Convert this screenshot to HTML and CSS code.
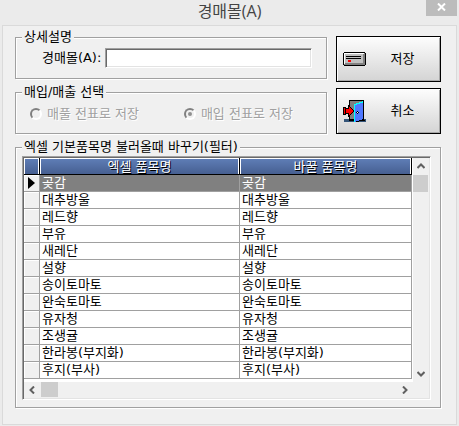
FILE: index.html
```html
<!DOCTYPE html>
<html lang="ko">
<head>
<meta charset="utf-8">
<title>경매몰(A)</title>
<link rel="stylesheet" href="styles.css">
</head>
<body>
<div class="window">
  <header class="titlebar">
    <h1>경매몰(A)</h1>
    <button class="close" type="button" aria-label="닫기"><svg width="9" height="8" viewBox="0 0 9 8"><path d="M1 0.5L8 7.5M8 0.5L1 7.5" stroke="#fff" stroke-width="2"/></svg></button>
  </header>
  <main class="panel">
    <div class="top">
      <div class="groups">
        <fieldset class="group details">
          <legend>상세설명</legend>
          <div class="field"><label for="mall">경매몰(A):</label><input id="mall" type="text"></div>
        </fieldset>
        <fieldset class="group kinds">
          <legend>매입/매출 선택</legend>
          <div class="choices">
            <label><input type="radio" name="kind" disabled>매풀 전표로 저장</label>
            <label><input type="radio" name="kind" checked disabled>매입 전표로 저장</label>
          </div>
        </fieldset>
      </div>
      <div class="actions">
        <button class="action" type="button">
          <svg width="23" height="14" viewBox="0 0 23 14" shape-rendering="crispEdges"><path d="M1 0h21v1h1v12h-1v1H1v-1H0V1h1z" fill="#000"/><path d="M1 1h21v12H1z" fill="#808080"/><path d="M1 1h20v1H2v10H1z" fill="#fff"/><path d="M2 2h18v9H2z" fill="#c0c0c0"/><path d="M3 4h15v1H3zM3 6h15v1H3z" fill="#000"/><path d="M5 8h3v2H5z" fill="#f00"/></svg>
          <span>저장</span>
        </button>
        <button class="action" type="button">
          <svg width="23" height="22" viewBox="0 0 23 22" shape-rendering="crispEdges"><path d="M1 19h22v3H1z" fill="#345478"/><path d="M6 0h15v20h1v1H6z" fill="#000"/><path d="M7 1h13v18H7z" fill="#808080"/><path d="M11 4l9-3v19l-5 2h-4z" fill="#4f78ff"/><path d="M11 4h2V3h3V2h3V1h1v2h-3v1h-3v1h-2v17h-1z" fill="#0ff"/><path d="M20 1h1v19h-2v1h-3v1h-3v-1h3v-1h3v-1h1z" fill="#000"/><path d="M14 11h1v1h1v1h-1v1h-1v-1h-1v-1h1z" fill="#000"/><path d="M14 12h1v1h-1z" fill="#fff"/><path d="M0 7h3v1h2V5h1v1h1v1h1v1h1v1h1v1h1v2h-1v1H9v1H8v1H7v1H6v1H5v-3H3v1H0z" fill="#000"/><path d="M1 8h1v6H1zM3 9h3V7h1v1h1v1h1v1h1v2H9v1H8v1H7v1H6v-2H3z" fill="#f00"/></svg>
          <span>취소</span>
        </button>
      </div>
    </div>
    <fieldset class="group filter">
      <legend>엑셀 기본품목명 불러올때 바꾸기(필터)</legend>
      <div class="grid">
        <div class="view">
          <table>
            <colgroup><col class="mark"><col class="from"><col></colgroup>
            <thead><tr><th aria-label="선택"></th><th>엑셀 품목명</th><th>바꿀 품목명</th></tr></thead>
            <tbody>
              <tr class="current"><td><svg width="7" height="12" viewBox="0 0 7 12"><path d="M0 0L7 6L0 12z"/></svg></td><td>곶감</td><td>곶감</td></tr>
              <tr><td></td><td>대추방울</td><td>대추방울</td></tr>
              <tr><td></td><td>레드향</td><td>레드향</td></tr>
              <tr><td></td><td>부유</td><td>부유</td></tr>
              <tr><td></td><td>새레단</td><td>새레단</td></tr>
              <tr><td></td><td>설향</td><td>설향</td></tr>
              <tr><td></td><td>송이토마토</td><td>송이토마토</td></tr>
              <tr><td></td><td>완숙토마토</td><td>완숙토마토</td></tr>
              <tr><td></td><td>유자청</td><td>유자청</td></tr>
              <tr><td></td><td>조생귤</td><td>조생귤</td></tr>
              <tr><td></td><td>한라봉(부지화)</td><td>한라봉(부지화)</td></tr>
              <tr><td></td><td>후지(부사)</td><td>후지(부사)</td></tr>
            </tbody>
          </table>
        </div>
        <div class="bar vertical">
          <button type="button" aria-label="위로"><svg width="8" height="6" viewBox="0 0 8 6"><path d="M0.5 5L4 1.5L7.5 5"/></svg></button>
          <div class="thumb"></div>
          <button class="end" type="button" aria-label="아래로"><svg width="8" height="6" viewBox="0 0 8 6"><path d="M0.5 1L4 4.5L7.5 1"/></svg></button>
        </div>
        <div class="bar horizontal">
          <button type="button" aria-label="왼쪽"><svg width="6" height="8" viewBox="0 0 6 8"><path d="M5 0.5L1.5 4L5 7.5"/></svg></button>
          <div class="thumb"></div>
          <button class="end" type="button" aria-label="오른쪽"><svg width="6" height="8" viewBox="0 0 6 8"><path d="M1 0.5L4.5 4L1 7.5"/></svg></button>
        </div>
      </div>
    </fieldset>
  </main>
</div>
</body>
</html>
```
FILE: styles.css
```css
* { box-sizing: border-box; }
body {
  margin: 0;
  background: #ebebeb;
  color: #000;
  font: 13px/16px "DejaVu Sans", "Noto Sans CJK KR", sans-serif;
}
button, input { font: inherit; color: inherit; }
.window { padding: 0 2px 2px; }

.titlebar {
  display: grid;
  grid-template-columns: 1fr auto 1fr;
  align-items: start;
  height: 25px;
}
.titlebar h1 {
  grid-column: 2;
  margin: 0;
  color: #444;
  font: 16px/22px "Open Sans", "Noto Sans CJK KR", sans-serif;
}
.close {
  display: grid;
  place-items: center;
  justify-self: end;
  width: 31px;
  height: 16px;
  padding: 0 0 2px;
  border: 0;
  background: #bcbcbc;
}

.panel {
  padding: 3px 15px 16px 12px;
  border: 1px solid #dadada;
  background: #f0f0f0;
}
.top { display: flex; gap: 9px; }
.groups { flex: 1; min-width: 0; }
.actions {
  display: flex;
  flex-direction: column;
  gap: 6px;
  width: 105px;
  padding-top: 7px;
}

.group {
  min-width: 0;
  margin: 0;
  padding: 0;
  border: 1px solid #a0a0a0;
  box-shadow: 1px 1px 0 #fff, inset 1px 1px 0 #fff;
}
.group legend {
  margin-left: 6px;
  padding: 0 2px;
  background: #f0f0f0;
}
.details { height: 50px; }
.kinds { height: 50px; margin-top: 5px; }
.field {
  display: flex;
  align-items: center;
  justify-content: space-between;
  gap: 4px;
  padding: 3px 14px 0 26px;
}
.field input {
  flex: 1;
  min-width: 0;
  height: 20px;
  padding: 0 2px;
  border: 1px solid;
  border-color: #a0a0a0 #fff #fff #a0a0a0;
  background: #fff;
  box-shadow: inset 1px 1px 0 #696969, inset -1px -1px 0 #e3e3e3;
}
.choices {
  display: grid;
  grid-template-columns: 13fr 12fr;
  padding: 6px 0 0 14px;
  color: #a0a0a0;
  text-shadow: 1px 1px 0 #fff;
}
.choices label { display: flex; align-items: center; gap: 5px; }
.choices input {
  appearance: none;
  display: grid;
  place-items: center;
  width: 12px;
  height: 12px;
  margin: 0;
  border: 2px solid;
  border-color: #808080 #fff #fff #808080;
  border-radius: 50%;
}
.choices input:checked::before {
  content: "";
  width: 4px;
  height: 4px;
  border-radius: 50%;
  background: #909090;
}

.action {
  display: grid;
  grid-template-columns: 23px 1fr;
  align-items: center;
  height: 46px;
  padding: 0 1px 0 6px;
  border: 1px solid #000;
  background: linear-gradient(#fdfdfd, #d4d4d4);
  box-shadow: inset 1px 1px 0 #fff, inset -1px -1px 0 #a8a8a8;
}

.filter { margin-top: 5px; }
.grid {
  display: grid;
  grid-template-columns: minmax(0, 1fr) 16px;
  margin: 1px 9px 7px 6px;
  border: 1px solid;
  border-color: #a0a0a0 #fff #fff #a0a0a0;
  background: #f0f0f0;
  box-shadow: inset 1px 1px 0 #696969, inset -1px -1px 0 #e3e3e3;
  padding: 1px;
}
.view { padding: 0 1px 3px 0; background: #fff; }
table {
  width: 100%;
  table-layout: fixed;
  border-collapse: separate;
  border-spacing: 0;
}
.mark { width: 16px; }
.from { width: 200px; }
th, td {
  height: 17px;
  padding: 0 0 0 2px;
  line-height: 16px;
  text-align: left;
  white-space: nowrap;
  border-right: 1px solid #a0a0a0;
  border-bottom: 1px solid #a0a0a0;
}
th {
  padding: 0;
  color: #fff;
  font-weight: normal;
  line-height: 15px;
  text-align: center;
  text-shadow: 1px 1px 0 #000;
  border-color: #000;
  background: linear-gradient(#607fb8, #465f91);
  box-shadow: inset 1px 1px 0 #fff, inset -1px 0 0 #fff;
}
td:first-child {
  padding: 0 0 0 4px;
  background: #f0f0f0;
  box-shadow: inset 1px 1px 0 #fff;
}
td svg { display: block; }
.current td:nth-child(n + 2) { color: #fff; background: #808080; }

.bar { display: flex; background: #f0f0f0; }
.bar button {
  display: grid;
  place-items: center;
  width: 16px;
  height: 16px;
  padding: 0;
  border: 0;
  background: none;
}
.bar path { fill: none; stroke: #606060; stroke-width: 2; }
.thumb { background: #cdcdcd; }
.bar .end { margin: auto 0 0 auto; }
.vertical { flex-direction: column; }
.vertical .thumb { width: 15px; height: 17px; margin-top: 1px; }
.horizontal .thumb { width: 17px; height: 15px; margin-left: 1px; }
```
